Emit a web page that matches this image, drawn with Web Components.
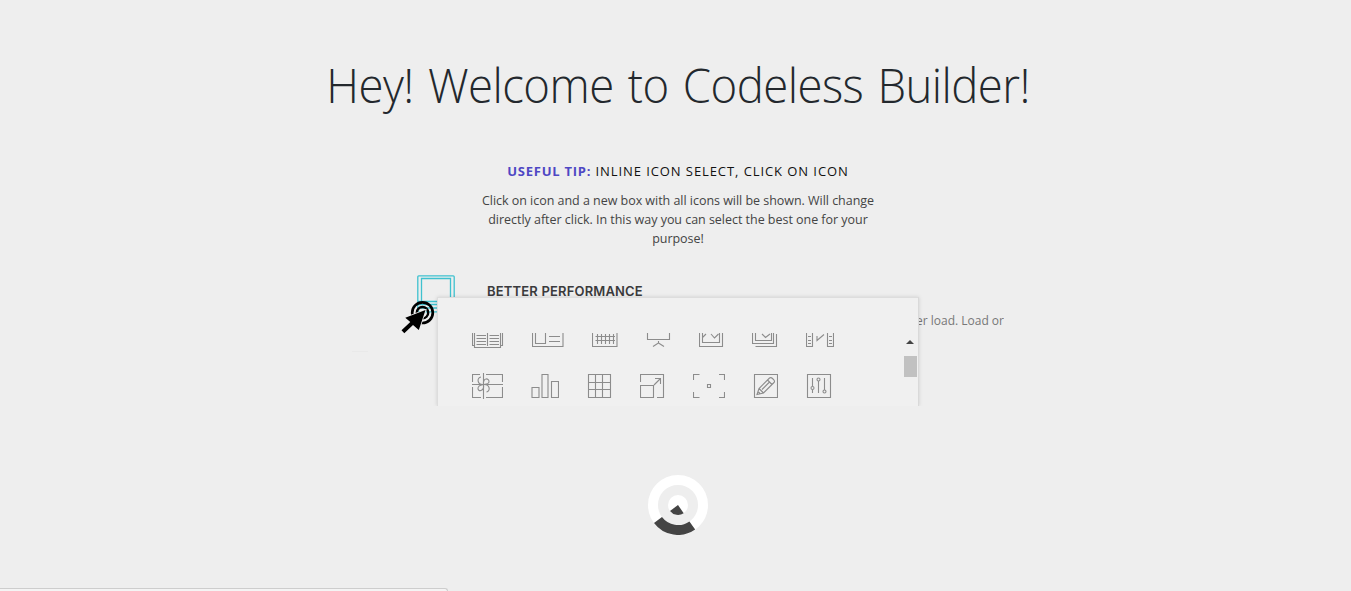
<!DOCTYPE html>
<html lang="en">
<head>
<meta charset="utf-8">
<title>Codeless Builder</title>
<style>
html,body{margin:0;height:100%;background:#eee;overflow:hidden}
body{font-family:"Open Sans","Noto Sans",sans-serif;color:#23282d}
</style>
</head>
<body>
<welcome-screen></welcome-screen>
<script>
const define=(name,html)=>customElements.define(name,class extends HTMLElement{
  constructor(){super();this.attachShadow({mode:'open'}).innerHTML=html;}
});

// Line icons: [width, markup]; all are 26px high
const ICONS={
  book:[32,'<path d="M.5 0V23.5H2.5V25.5H28.5V23.5H30.5V0M2.5 0V23M28.5 0V23M15.500 0V24M4.5 13.5H14M4.5 16.5H14M4.5 19.5H14M4.5 22.5H14M17.500 13.5H27M17.500 16.5H27M17.500 19.5H27M17.500 22.5H27"/>'],
  layout:[32,'<path d="M.5 0V24.5H31V0M3.5 0V21.5H13.5V0M17 14.5H28M17 19.5H28"/>'],
  keyboard:[26,'<path d="M.5 0V24.5H25V0M3.5 14.5H23M3.5 18.5H23M5.5 12V22M9.5 12V22M13.5 12V22M17.5 12V22M21.5 12V22"/>'],
  board:[25,'<path d="M1.5 0V17.5H23.5V0M12.5 19V21L7 24.5M12.5 21L18 24.5"/>'],
  picture:[25,'<path d="M.5 0V24.5H23.5V0M3.5 0V20.5H20.5V0M3.5 15.5L7 12M12 12L15.500 16L19.500 12"/>'],
  pictures:[26,'<path d="M.5 0V21.500H21.500V0M3.500 0V18.500H19.500V0M10 12L13.500 15.500L18 12M24.500 12V24.500H3.500"/>'],
  film:[28,'<path d="M.5 0V24.500H6.500V0M21.500 0V24.500H27.500V0M2 14.500H5M2 18.500H5M2 21.500H5M23 14.500H26M23 18.500H26M23 21.500H26M11 14V18.500L18 12.500"/>'],
  gift:[31,'<path d="M8 1.500H.5V9M.5 14V24.500H9M14 1.500H30.500V9M30.500 14V24.500H14M0 11.500H31M11.500 0V26"/><path d="M11.500 11.500C5 12 4.500 4.500 9 4M11.500 11.500C10.500 4 17.500 5 17 9C16.500 11.500 13 11 11.500 11.500C18.500 11 18.500 18.500 14.500 19M11.500 11.500C12.500 19 5.500 19 6 15C6.500 12 9 12 11.500 11.500"/>'],
  chart:[28,'<path d="M1 24.500V14.500H8V24.500ZM11 24.500V1.500H17V24.500ZM20.500 24.500V8.500H27.500V24.500Z"/>'],
  grid:[25,'<path d="M1.500 1.500H23.500V24.500H1.500ZM8.500 1.500V24.500M15.500 1.500V24.500M1.500 9.500H23.500M1.500 16.500H23.500"/>'],
  resize:[25,'<path d="M.5 9V1.500H23.500V24.500H17M.5 12.500H13.500V24.500H.5ZM14 12L20 6M15 5.500H20.500V11"/>'],
  focus:[32,'<path d="M.5 7V1.500H6.500M26 1.500H31.500V7M.5 19V24.500H6.500M26 24.500H31.500V19M14.500 11.500H17.500V14.500H14.500Z"/>'],
  edit:[25,'<path d="M1.500 1.500H24.500V24.500H1.500Z"/><path d="M4 21.500L6 15.500L16.500 5Q18 4 19.500 5.500L21 7Q22 8.500 21 9.500L10.500 20ZM6 15.500L10.500 20M14.500 7L19 11.500M9 16.500L16.500 9M5 18.500L7 20.500"/>'],
  sliders:[26,'<path d="M1.500 1.500H24.500V24.500H1.500ZM6.500 5V13M6.500 17V20M12.500 8V20M18.500 5V17"/><circle cx="6.500" cy="15" r="1.500"/><circle cx="12.500" cy="6.500" r="1.500"/><circle cx="18.500" cy="18.500" r="1.500"/>']
};
customElements.define('line-icon',class extends HTMLElement{
  constructor(){super();this.attachShadow({mode:'open'});}
  connectedCallback(){
    const [w,m]=ICONS[this.getAttribute('name')];
    this.shadowRoot.innerHTML=`<style>:host{display:block;flex:none}svg{display:block;fill:none;stroke:#8c8c8c;stroke-width:1.100}</style><svg width="${w}" height="26" viewBox="0 0 ${w} 26">${m}</svg>`;
  }
});

define('welcome-title',`<style>
:host{display:flex;justify-content:center;height:70px;margin-top:50px}
h1{margin:0;font:300 48px/70px "Open Sans",sans-serif;letter-spacing:-.55px;word-spacing:3px;transform:scaleX(.948);white-space:nowrap;color:#23282d}
</style><h1><slot></slot></h1>`);

define('useful-tip',`<style>
:host{display:block;width:410px;margin:41px auto 0;text-align:center}
h2{margin:0;font:400 13px/20px "Open Sans",sans-serif;letter-spacing:.92px;color:#111;text-transform:uppercase;white-space:nowrap}
b{font-weight:700;color:#4e47c4;letter-spacing:.75px}
p{margin:10px 0 0;font:400 12.500px/19px "Open Sans",sans-serif;letter-spacing:-.03px;color:#444}
</style><h2><b>Useful tip:</b> <slot name="title"></slot></h2><p><slot></slot></p>`);

define('feature-card',`<style>
:host{display:flex;align-items:flex-start;padding:18px 0 0 67px}
svg{flex:none;display:block}
.text{flex:1;margin-left:32px;min-width:0}
h3{margin:6px 0 0;font:600 13px/20px Inter,sans-serif;letter-spacing:.17px;color:#3a3a3c;white-space:nowrap}
p{margin:10px 0 0;font:400 12px/20px "Open Sans",sans-serif;color:#777;text-align:right;white-space:nowrap}
</style>
<svg width="38" height="38" viewBox="0 0 38 38" fill="none" stroke="#3fc1cf" stroke-width="1.300"><rect x=".8" y=".8" width="36.400" height="36" rx="1"/><path d="M4.500 27V3.500H33.500V27M1 26.500H37M1 29.500H37M4 33H34"/></svg>
<div class="text"><h3><slot name="title"></slot></h3><p><slot></slot></p></div>`);

define('icon-picker',`<style>
:host{display:flex;box-sizing:border-box;height:109px;background:#f0f0f0;border:1px solid #ddd;border-bottom:0;border-right-color:#d9d9d9;box-shadow:0 0 4px rgba(0,0,0,.13);padding:35px 1px 0 34px}
.rows{flex:1;overflow:hidden}
.row{display:flex;gap:28px}
.first{margin-top:-11px}
.second{margin-top:25px}
.bar{width:13px;display:flex;flex-direction:column;align-items:center}
.up{width:0;height:0;margin:7px 1px 0 0;border:4px solid transparent;border-top:0;border-bottom:4px solid #444}
.thumb{width:13px;height:21px;margin-top:12px;background:#c1c1c1}
</style>
<div class="rows"><div class="row first"><slot name="first"></slot></div><div class="row second"><slot></slot></div></div>
<div class="bar"><div class="up"></div><div class="thumb"></div></div>`);

define('click-pointer',`<style>:host{display:block}svg{display:block}</style>
<svg width="36" height="36" viewBox="0 0 36 36"><g fill="none" stroke="#000" stroke-width="2.700"><circle cx="22.500" cy="14.700" r="10.300"/><circle cx="22.500" cy="14.700" r="5.700" stroke-width="2.400"/></g>
<path d="M25.500 12L5.300 19.800L10.300 24L1.500 32.300L4.300 35.300L13 27L18.800 32Z" stroke="#eee" stroke-width="1.600"/><path d="M25.500 12L5.300 19.800L10.300 24L1.500 32.300L4.300 35.300L13 27L18.800 32Z"/></svg>`);

define('tip-preview',`<style>
:host{display:block;position:relative;width:654px;height:149px;margin:9px 0 0 350px}
.picker{position:absolute;left:87px;top:40px;width:482px}
.clip{position:absolute;inset:0;overflow:hidden}
.pointer{position:absolute;left:50px;top:41px}
.trace{position:absolute;left:2px;top:94px;width:16px;height:1px;background:#e9e9e9}
</style>
<div class="clip"><slot name="card"></slot><div class="trace"></div><div class="picker"><slot name="picker"></slot></div></div><div class="pointer"><click-pointer></click-pointer></div>`);

define('loading-spinner',`<style>:host{display:flex;justify-content:center;margin:69px 0 0 5px}svg{display:block}</style>
<svg width="60" height="60" viewBox="-30 -30 60 60"><g fill="none" stroke-width="10"><circle r="25" stroke="#fff"/><path d="M-20 15A25 25 0 0 0 14.300 20.500" stroke="#444"/></g><circle r="10" fill="#fff"/><path d="M0 0L-8 6A10 10 0 0 0 5.700 8.200Z" fill="#444"/></svg>`);

define('status-bar',`<style>:host{display:block;box-sizing:border-box;width:448px;height:3px;border:1px solid #cdcdcd;border-width:1px 1px 0 0;border-radius:0 3px 0 0;background:#f4f4f4}</style>`);

define('welcome-screen',`<style>
:host{display:flex;flex-direction:column;height:591px;overflow:hidden}
welcome-title{margin-left:6px}
useful-tip{position:relative;left:2.500px}
.space{flex:1}
</style>
<welcome-title>Hey! Welcome to Codeless Builder!</welcome-title>
<useful-tip><span slot="title">Inline icon select, click on icon</span>Click on icon and a new box with all icons will be shown. Will change<br>directly after click. In this way you can select the best one for your<br>purpose!</useful-tip>
<tip-preview>
<feature-card slot="card"><span slot="title">BETTER PERFORMANCE</span>er load. Load or</feature-card>
<icon-picker slot="picker">
${['book','layout','keyboard','board','picture','pictures','film'].map(n=>`<line-icon slot="first" name="${n}"></line-icon>`).join('')}
${['gift','chart','grid','resize','focus','edit','sliders'].map(n=>`<line-icon name="${n}"></line-icon>`).join('')}
</icon-picker>
</tip-preview>
<loading-spinner></loading-spinner>
<div class="space"></div>
<status-bar></status-bar>`);
</script>
</body>
</html>
